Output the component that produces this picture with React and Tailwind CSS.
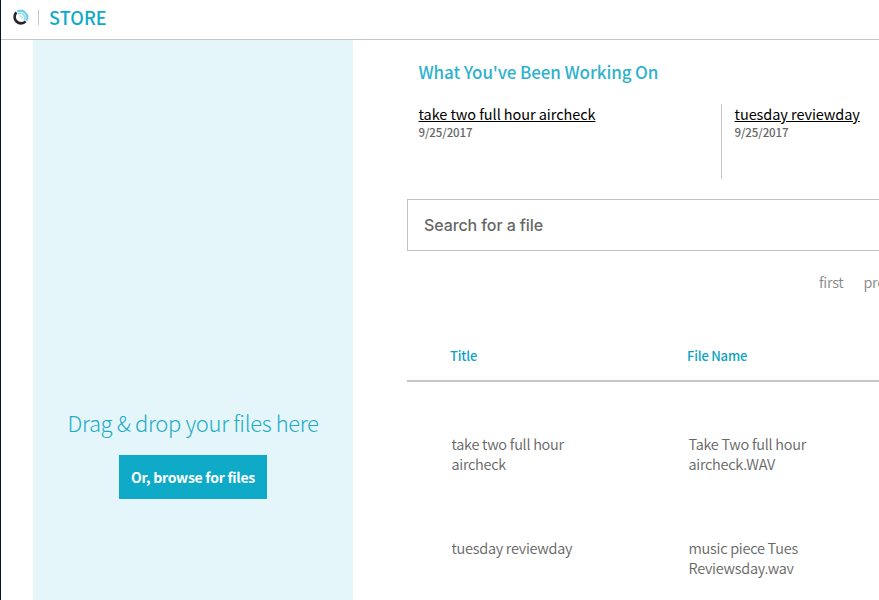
function Logo() {
  return (
    <svg width="17" height="17" viewBox="0 0 17 17" fill="none">
      <path d="M4.4 3.4A6.2 6.2 0 1 0 13.6 12.4" stroke="#22252a" strokeWidth="2.6" />
      <path d="M5.2 2.6A6.8 6.8 0 0 1 14.4 11.8" stroke="#6fcfe1" strokeWidth="2.1" />
      <path d="M6 4.8A4.6 4.6 0 0 1 12.3 11" stroke="#98deea" strokeWidth="1.8" />
      <path d="M7 7A2.6 2.6 0 0 1 10.4 9.8" stroke="#b5e8f0" strokeWidth="1.4" />
    </svg>
  );
}

const recent = [
  { title: "take two full hour aircheck", date: "9/25/2017" },
  { title: "tuesday reviewday", date: "9/25/2017" },
];

const files = [
  { title: "take two full hour aircheck", name: "Take Two full hour aircheck.WAV" },
  { title: "tuesday reviewday", name: "music piece Tues Reviewsday.wav" },
];

export default function App() {
  return (
    <div className="flex h-[600px] w-[879px] flex-col overflow-hidden border-l border-[#04141f] bg-white font-['Noto_Sans_CJK_SC',sans-serif]">
      <header className="flex h-10 shrink-0 items-center border-b border-[#c6c6c6] pb-1 pl-[11px]">
        <Logo />
        <span className="ml-[9px] h-[15px] w-px bg-[#c6c6c6]" />
        <span className="ml-[10px] pb-0.5 text-[18px] leading-5 font-medium tracking-[0.1px] text-[#0eaac8]">STORE</span>
      </header>
      <div className="flex min-h-0 flex-1">
        <aside className="ml-8 flex w-80 shrink-0 flex-col items-center bg-[#e4f6f9] pt-[364px]">
          <p className="text-[22px] leading-9 font-light tracking-[-0.36px] whitespace-nowrap text-[#1fabc8]">Drag &amp; drop your files here</p>
          <button className="mt-[15px] h-11 w-[148px] bg-[#0eaac8] text-[14px] leading-5 font-bold tracking-[-0.26px] whitespace-nowrap text-white">
            Or, browse for files
          </button>
        </aside>
        <main className="ml-[54px] w-[640px] shrink-0">
          <h2 className="ml-[11.5px] pt-5 text-[17px] leading-6 font-medium tracking-[-0.12px] text-[#2fb2cd]">
            What You've Been Working On
          </h2>
          <div className="mt-5 flex h-[75px]">
            {recent.map((r, i) => (
              <div key={r.title} className={i ? "w-[316px] shrink-0 border-l border-[#c6c6c6] pl-[12.5px]" : "w-[314px] shrink-0 pl-[11.5px]"}>
                <a className="block text-[14.5px] leading-[19px] tracking-[-0.07px] whitespace-nowrap text-black underline">{r.title}</a>
                <p className="mt-px text-[11.5px] leading-4 font-medium tracking-[-0.1px] text-[#666]">{r.date}</p>
              </div>
            ))}
          </div>
          <div className="mt-5 flex h-[52px] items-center border border-[#c3c3c3] pl-4 font-['Inter',sans-serif] text-[16px] font-medium tracking-[-0.1px] text-[#666]">
            <span>Search for a file</span>
          </div>
          <nav className="mt-[21px] ml-[412px] flex gap-5 text-[14.5px] leading-5 font-[350] tracking-[-0.25px] text-[#888]">
            <span>first</span>
            <span>prev</span>
          </nav>
          <div className="mt-[33px] flex h-[57px] items-start border-b-2 border-[#c6c6c6] pt-[21px] text-[13px] leading-5 font-medium tracking-[-0.2px] text-[#0ea3c2]">
            <span className="ml-[43px] w-[237px]">Title</span>
            <span>File Name</span>
          </div>
          <div className="pt-[52px] text-[14.5px] leading-5 font-[350] tracking-[-0.26px] text-[#666]">
            {files.map((f) => (
              <div key={f.name} className="flex h-[104px] pl-[44.5px]">
                <p className="w-[237px] pr-24">{f.title}</p>
                <p className="w-[140px]">{f.name}</p>
              </div>
            ))}
          </div>
        </main>
      </div>
    </div>
  );
}
